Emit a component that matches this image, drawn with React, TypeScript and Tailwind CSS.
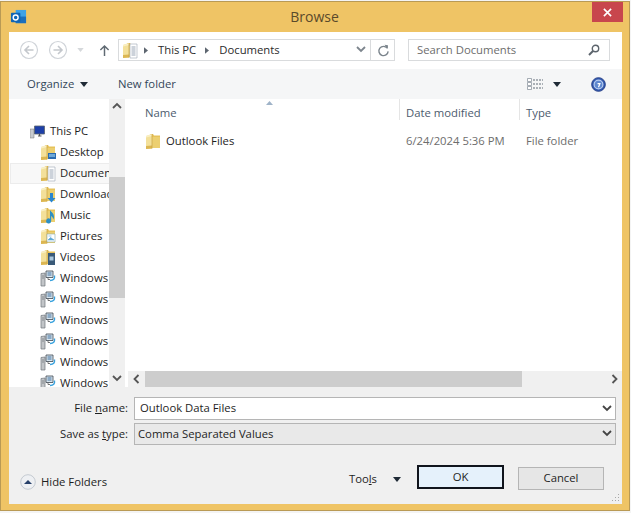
import { ReactNode } from 'react';

const Caret = ({ className = '' }: { className?: string }) => (
  <svg viewBox="0 0 8 5" className={`w-[8px] h-[5px] ${className}`}><path d="M0 0h8L4 5z" fill="#1f2a36" /></svg>
);

const Chevron = ({ dir = 'down', color = '#555' }: { dir?: 'up' | 'down' | 'left' | 'right'; color?: string }) => {
  const d = { up: 'M1 6l4-4 4 4', down: 'M1 2l4 4 4-4', left: 'M6.5 1l-4 4 4 4', right: 'M3.5 1l4 4-4 4' }[dir];
  return <svg viewBox="0 0 10 10" className="w-[10px] h-[10px]"><path d={d} fill="none" stroke={color} strokeWidth="1.8" /></svg>;
};

const Folder = ({ children }: { children?: ReactNode }) => (
  <svg viewBox="0 0 16 17" className="w-[16px] h-[17px] shrink-0">
    <path d="M5 1h3l1 1.500h6V15H5z" fill="#e6c25a" />
    <path d="M6 4h9v11H6z" fill="#eccf70" />
    <path d="M1 3 7 1v14.500L1 16z" fill="#f3e09a" />
    <path d="M1 3 7 1v2L1 4.500z" fill="#f9efc4" />
    <path d="M1 13l6-.5v3L1 16z" fill="#dcb652" />
    <path d="M7 1v14.500" stroke="#c9a243" strokeWidth=".7" />
    {children}
  </svg>
);

const TreeIcon = ({ kind }: { kind: string }) => {
  if (kind === 'net') {
    return (
      <svg viewBox="0 0 16 17" className="w-[16px] h-[17px] shrink-0">
        <path d="M1 3.500 5 3v13H1z" fill="#c2c5c8" stroke="#70767c" strokeWidth=".7" />
        <path d="M2 6h2M2 8h2" stroke="#6c7176" strokeWidth=".7" />
        <path d="M6 1h7v6.500H6z" fill="#d7e4ee" stroke="#3c4650" strokeWidth=".8" />
        <path d="M7.500 3h4M7.500 5h4" stroke="#3f6f9c" strokeWidth="1" />
        <path d="M8 7.500V9.500h2" fill="none" stroke="#555" strokeWidth=".8" />
        <path d="M10 10.500c3.500 0 5-1.500 4.500-5" fill="none" stroke="#37a1dd" strokeWidth="1.400" />
      </svg>
    );
  }
  return (
    <Folder>
      {kind === 'desktop' && <path d="M8 9h8v6H8z" fill="#2b6cb0" />}
      {kind === 'desktop' && <path d="M9 10h6v3H9z" fill="#6ea8d8" />}
      {kind === 'doc' && <path d="M8 2h7v14H8z" fill="#fff" stroke="#9aa5b1" strokeWidth=".6" />}
      {kind === 'doc' && <path d="M9.500 5h4M9.500 7h4M9.500 9h4M9.500 11h4M9.500 13h4" stroke="#6d8097" strokeWidth=".7" />}
      {kind === 'down' && <path d="M10 7h3v5h2.500L11.500 16.500 7.500 12H10z" fill="#2a86cf" />}
      {kind === 'music' && <path d="M10 3c1 2 4 3 4 7 0 1-.5 2-1 2.500.2-2-1-3-1.800-3.500V14a2.500 2.500 0 1 1-1.200-2.200z" fill="#2d8fc4" />}
      {kind === 'pic' && <path d="M7 6h8v8H7z" fill="#fff" stroke="#8aa" strokeWidth=".6" />}
      {kind === 'pic' && <path d="M8 12l2.500-2.500L14 12zM8.500 8h3" fill="#5da8d8" stroke="#5da8d8" strokeWidth=".6" />}
      {kind === 'video' && <path d="M8 4h7v12H8z" fill="#3a5a78" />}
      {kind === 'video' && <path d="M9.500 7.500h4v4h-4z" fill="#a9c7dd" />}
    </Folder>
  );
};

const tree = [
  { label: 'Desktop', kind: 'desktop' },
  { label: 'Documents', kind: 'doc', active: true },
  { label: 'Downloads', kind: 'down' },
  { label: 'Music', kind: 'music' },
  { label: 'Pictures', kind: 'pic' },
  { label: 'Videos', kind: 'video' },
  { label: 'Windows', kind: 'net' },
  { label: 'Windows', kind: 'net' },
  { label: 'Windows', kind: 'net' },
  { label: 'Windows', kind: 'net' },
  { label: 'Windows', kind: 'net' },
  { label: 'Windows', kind: 'net' },
];

const NavCircle = ({ dir }: { dir: 'l' | 'r' }) => (
  <svg viewBox="0 0 20 20" className="w-[20px] h-[20px]">
    <circle cx="10" cy="10" r="8.500" fill="#fff" stroke="#cfd3d8" strokeWidth="1.200" />
    <path d={dir === 'l' ? 'M14.500 10h-8M10 6l-4 4 4 4' : 'M5.500 10h8M10 6l4 4-4 4'} fill="none" stroke="#c3c7cc" strokeWidth="1.600" />
  </svg>
);

export default function App() {
  return (
    <div className="w-[631px] h-[513px] bg-[#f4f4f4] pt-px pb-px pr-[1px] font-['Open_Sans','Noto_Sans',sans-serif] text-[11.3px] text-[#1e1e1e] overflow-hidden">
      <div className="h-[510px] flex flex-col border border-[#b99a55] bg-[#efc465] pb-[6px] pl-[8px] pr-[7px]">
        {/* Title bar */}
        <div className="h-[30px] shrink-0 flex items-start">
          <svg viewBox="0 0 18 18" className="w-[17px] h-[17px] mt-[7px] ml-[1px]">
            <path d="M6 1h11v14H6z" fill="#3fa2e6" />
            <path d="M6 8h11v7H6z" fill="#1b6fbd" />
            <rect x="1" y="4" width="10" height="10" rx="1" fill="#0f65b5" />
            <circle cx="6" cy="9" r="2.600" fill="none" stroke="#fff" strokeWidth="1.500" />
          </svg>
          <span className="flex-1 text-center text-[14px] leading-[30px] text-[#5a4a2b] pl-[10px]">Browse</span>
          <div className="w-[31px] h-[20px] mr-[-1px] bg-[#c8464d] flex items-center justify-center">
            <svg viewBox="0 0 10 10" className="w-[9px] h-[9px]"><path d="M1 1l8 8M9 1l-8 8" stroke="#fff" strokeWidth="1.800" /></svg>
          </div>
        </div>

        <div className="flex-1 min-h-0 flex flex-col bg-white">
          {/* Address row */}
          <div className="h-[37px] shrink-0 flex items-center pb-px pl-[10px] pr-[12px]">
            <NavCircle dir="l" />
            <div className="w-[9px]" />
            <NavCircle dir="r" />
            <svg viewBox="0 0 8 5" className="w-[7px] h-[4px] ml-[9px]"><path d="M0 0h8L4 5z" fill="#d5d8db" /></svg>
            <svg viewBox="0 0 12 14" className="w-[11px] h-[13px] ml-[15px]"><path d="M6 13V2M1.500 6.500 6 2l4.500 4.500" fill="none" stroke="#606a73" strokeWidth="1.600" /></svg>
            <div className="ml-[8px] flex-1 h-[22px] flex items-center border border-[#d9dbdd]">
              <div className="ml-[3px]"><TreeIcon kind="doc" /></div>
              <svg viewBox="0 0 5 8" className="w-[4px] h-[7px] ml-[6px]"><path d="M0 0l5 4-5 4z" fill="#5d6670" /></svg>
              <span className="ml-[10px] text-[#2b2b2b]">This PC</span>
              <svg viewBox="0 0 5 8" className="w-[4px] h-[7px] ml-[9px]"><path d="M0 0l5 4-5 4z" fill="#5d6670" /></svg>
              <span className="ml-[10px] text-[#2b2b2b]">Documents</span>
              <div className="flex-1" />
              <Chevron color="#7d858d" />
              <div className="ml-[4px] w-px h-full bg-[#d9dbdd]" />
              <svg viewBox="0 0 14 14" className="w-[13px] h-[13px] ml-[6px] mr-[4px]"><path d="M11 4.500A5 5 0 1 0 12 8" fill="none" stroke="#7b848c" strokeWidth="1.500" /><path d="M8 .8l3.800.6-.2 4z" fill="#7b848c" /></svg>
            </div>
            <div className="ml-[13px] w-[202px] h-[22px] flex items-center justify-between border border-[#d9dbdd] pl-[8px] pr-[9px]">
              <span className="text-[#6d6d6d]">Search Documents</span>
              <svg viewBox="0 0 12 12" className="w-[12px] h-[12px]"><circle cx="7.500" cy="4.500" r="3.200" fill="none" stroke="#5c646c" strokeWidth="1.400" /><path d="M5 7 1 11" stroke="#5c646c" strokeWidth="2" /></svg>
            </div>
          </div>

          {/* Toolbar */}
          <div className="h-[30px] shrink-0 bg-[#f5f6f7] flex items-center pt-px pl-[18px] pr-[16px]">
            <span className="w-[47px] whitespace-nowrap text-[#33475a]">Organize</span>
            <Caret className="ml-[6px]" />
            <span className="ml-[30px] text-[#33475a]">New folder</span>
            <div className="flex-1" />
            <svg viewBox="0 0 16 13" className="w-[16px] h-[13px]"><path d="M.5.500h4v3h-4zM.500 4.500h4v3h-4zM.500 8.500h4v3h-4z" fill="#fff" stroke="#7f8a95" strokeWidth=".7" /><path d="M6 2h10M6 6h10M6 10h10" stroke="#5e6a76" strokeDasharray="2 1" /></svg>
            <Caret className="ml-[10px]" />
            <svg viewBox="0 0 16 16" className="w-[15px] h-[15px] ml-[30px]"><circle cx="8" cy="8" r="7.300" fill="#2f57ad" stroke="#27408a" /><circle cx="8" cy="8" r="4.700" fill="#5f88cf" stroke="#b9cdf0" strokeWidth="1.300" /><path d="M7 7h2.500l-1.500 4" fill="none" stroke="#fff" strokeWidth="1.300" /></svg>
          </div>

          {/* Tree + list */}
          <div className="flex-1 min-h-0 flex">
            <div className="w-[100px] shrink-0 overflow-hidden pt-[22px]">
              <div className="h-[21px] flex items-center pl-[21px]">
                <svg viewBox="0 0 16 14" className="w-[16px] h-[14px] shrink-0"><path d="M0 4h4v9H0z" fill="#c9ccd0" stroke="#777" strokeWidth=".5" /><path d="M4.500 1h10v8h-10z" fill="#1d3fa8" stroke="#5a6470" strokeWidth=".8" /><path d="M8 11h3.500M9.500 9v2" stroke="#555" strokeWidth="1.200" /></svg>
                <span className="ml-[4px] whitespace-nowrap">This PC</span>
              </div>
              {tree.map((item, i) => (
                <div key={i} className={`h-[21px] flex items-center ${item.active ? 'bg-[#f8f8f8] border-y border-l border-[#ececec] ml-px pl-[29px]' : 'pl-[31px]'}`}>
                  <TreeIcon kind={item.kind} />
                  <span className="ml-[4px] whitespace-nowrap">{item.label}</span>
                </div>
              ))}
            </div>

            {/* Tree scrollbar */}
            <div className="w-[16px] shrink-0 bg-[#f0f0f0] flex flex-col items-center">
              <div className="h-[16px] shrink-0 flex items-center justify-center"><Chevron dir="up" /></div>
              <div className="h-[62px] shrink-0" />
              <div className="w-full h-[121px] shrink-0 bg-[#cdcdcd]" />
              <div className="flex-1" />
              <div className="h-[16px] shrink-0 flex items-center justify-center"><Chevron dir="down" /></div>
            </div>

            {/* File list */}
            <div className="flex-1 min-w-0 flex flex-col">
              <div className="flex-1 min-h-0 pl-[20px]">
                <div className="relative h-[21px] flex">
                  <span className="w-[254px] pt-[6px] text-[#4c5b6e]">Name</span>
                  <svg viewBox="0 0 7 4" className="absolute left-[121px] top-[2px] w-[7px] h-[4px]"><path d="M0 4l3.500-4L7 4z" fill="#9fb3c8" /></svg>
                  <span className="w-[120px] pt-[6px] pl-[6px] border-l border-[#e5e5e5] text-[#4c5b6e]">Date modified</span>
                  <span className="pt-[6px] pl-[6px] border-l border-[#e5e5e5] text-[#4c5b6e]">Type</span>
                </div>
                <div className="mt-[11px] flex items-center h-[20px]">
                  <div className="w-[254px] flex items-center">
                    <Folder />
                    <span className="ml-[5px]">Outlook Files</span>
                  </div>
                  <span className="w-[120px] pl-[7px] text-[#6d6d6d]">6/24/2024 5:36 PM</span>
                  <span className="pl-[7px] text-[#6d6d6d]">File folder</span>
                </div>
              </div>
              <div className="h-[16px] shrink-0 ml-[3px] bg-[#f0f0f0] flex items-center">
                <div className="w-[17px] flex justify-center"><Chevron dir="left" /></div>
                <div className="w-[377px] h-full bg-[#cdcdcd]" />
                <div className="flex-1" />
                <div className="w-[17px] flex justify-center"><Chevron dir="right" /></div>
              </div>
            </div>
          </div>

          {/* Bottom panel */}
          <div className="relative h-[117px] shrink-0 bg-[#f0f0f0] flex flex-col">
            <div className="mt-[10px] flex items-center pr-[6px] h-[23px]">
              <span className="w-[119px] text-right">File <u>n</u>ame:</span>
              <div className="ml-[6px] flex-1 h-[23px] bg-white border border-[#b5b5b5] flex items-center justify-between pl-[5px] pr-[3px]">
                <span>Outlook Data Files</span>
                <Chevron color="#444" />
              </div>
            </div>
            <div className="mt-[3px] flex items-center pr-[6px] h-[22px]">
              <span className="w-[119px] text-right">Save as <u>t</u>ype:</span>
              <div className="ml-[6px] flex-1 h-[22px] bg-[#e9e9e9] border border-[#b5b5b5] flex items-center justify-between pl-[3px] pr-[3px]">
                <span>Comma Separated Values</span>
                <Chevron color="#444" />
              </div>
            </div>
            <div className="flex-1 flex items-end pb-[15px] pl-[11px]">
              <div className="flex items-center h-[24px] mb-[-5px]">
                <svg viewBox="0 0 16 16" className="w-[16px] h-[16px]"><circle cx="8" cy="8" r="7.300" fill="#eef0f3" stroke="#c4cad1" /><path d="M4 10l4-4 4 4z" fill="#27406a" /></svg>
                <span className="ml-[5px]">Hide Folders</span>
              </div>
              <div className="flex-1" />
              <div className="flex items-center h-[24px] mb-[-2px]">
                <span>Too<u>l</u>s</span>
                <Caret className="ml-[16px]" />
              </div>
              <div className="ml-[16px] w-[87px] h-[24px] bg-[#e5f1fb] border-2 border-[#10141c] flex items-center justify-center">OK</div>
              <div className="ml-[14px] mr-[18px] w-[86px] h-[23px] mb-[-1px] bg-[#e6e6e6] border border-[#b5b5b5] flex items-center justify-center">Cancel</div>
            </div>
            <svg viewBox="0 0 8 8" className="absolute right-[2px] bottom-[2px] w-[8px] h-[8px]"><path d="M6 0h1v1H6zM3 3h1v1H3zM6 3h1v1H6zM0 6h1v1H0zM3 6h1v1H3zM6 6h1v1H6z" fill="#a8a8a8" /></svg>
          </div>
        </div>
      </div>
    </div>
  );
}
